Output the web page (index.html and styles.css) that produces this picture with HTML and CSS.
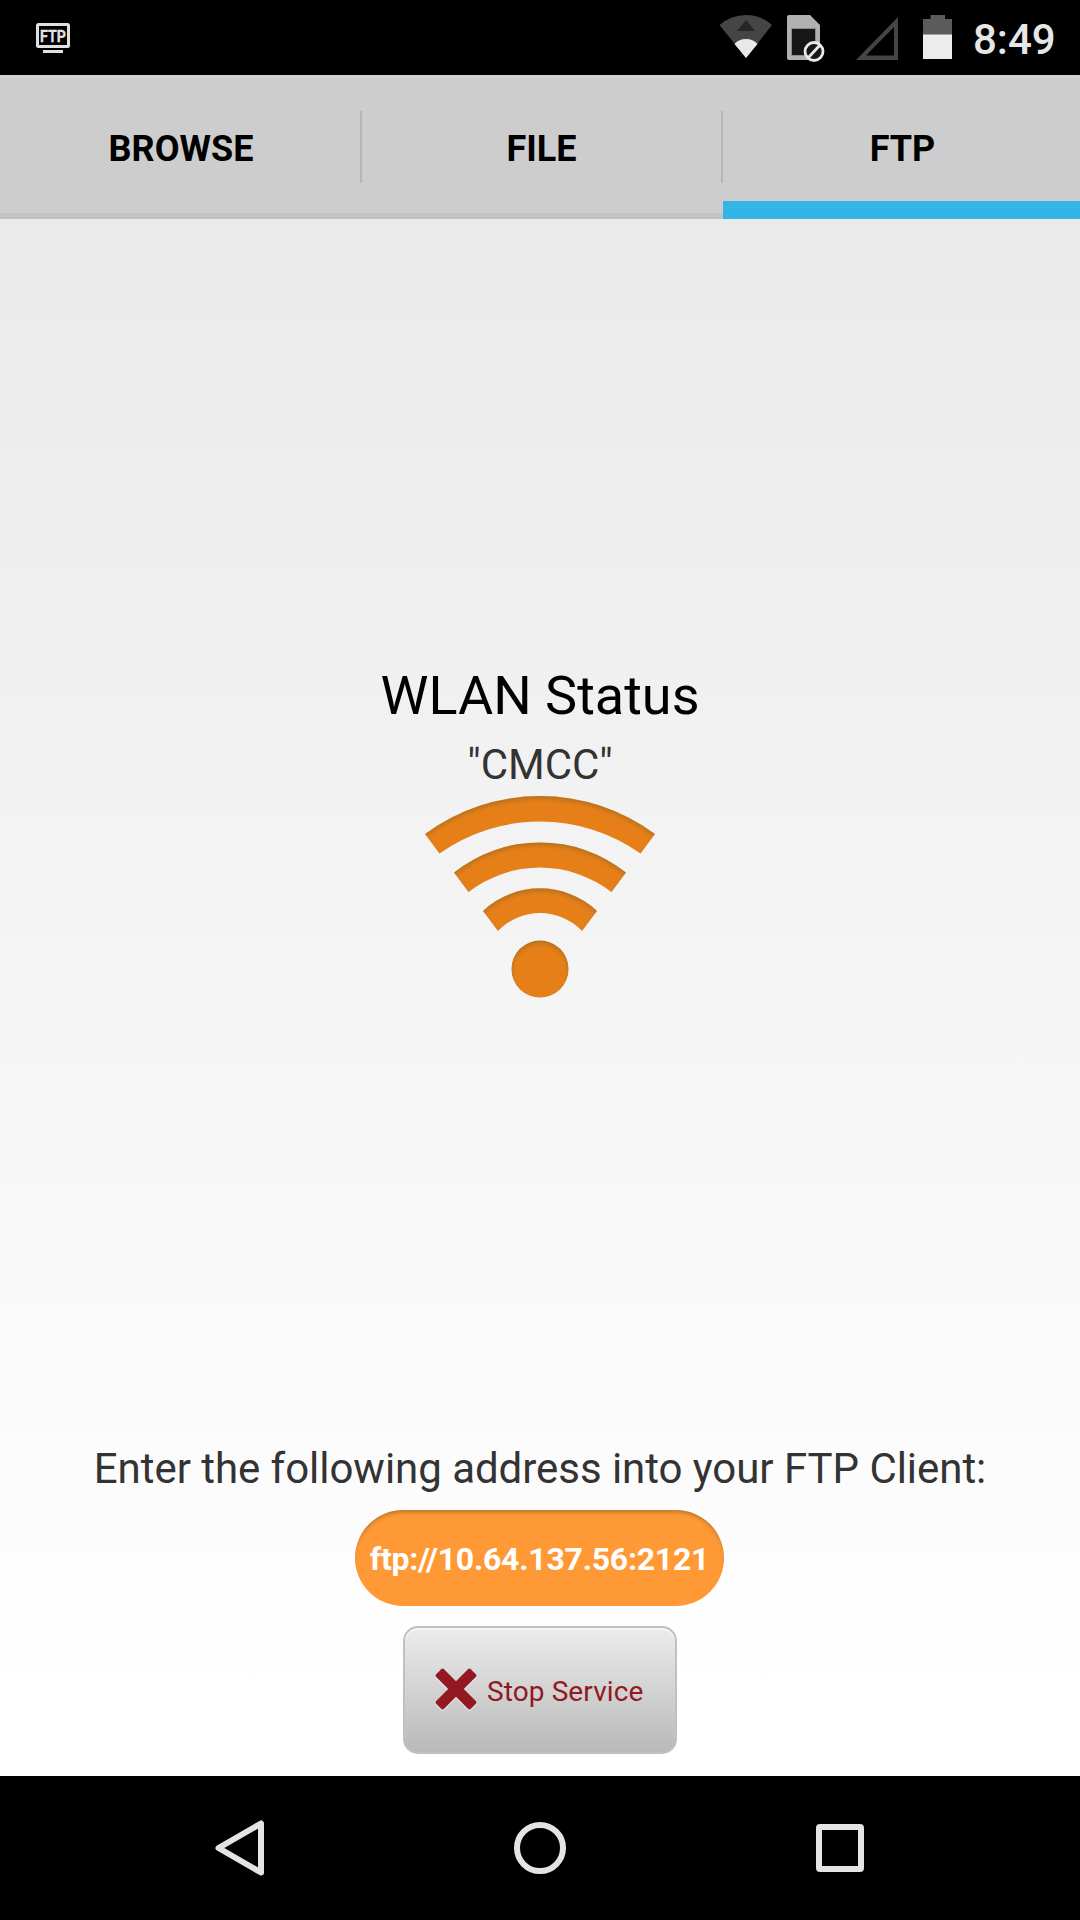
FILE: index.html
```html
<!DOCTYPE html>
<html lang="en">
<head>
    <meta charset="UTF-8">
    <meta name="viewport" content="width=device-width, initial-scale=1.0">
    <title>FTP</title>
    <link rel="stylesheet" href="styles.css">
</head>
<body>
    <header class="statusbar">
        <svg class="notification" width="34" height="32" viewBox="0 0 34 32">
            <rect x="1.500" y="1.500" width="31" height="22" rx="1" fill="none" stroke="#e0e0e0" stroke-width="3"/>
            <text class="ftp-label" x="17" y="18.500" text-anchor="middle" textLength="26" lengthAdjust="spacingAndGlyphs">FTP</text>
            <rect x="7" y="27" width="20" height="3" fill="#e0e0e0"/>
        </svg>
        <div class="indicators">
            <svg class="wifi-small" width="54" height="44" viewBox="0 0 54 44">
                <path d="M.5 10Q12 0 27 0T53 10L27 43Z" fill="#454545"/>
                <path d="M27 5L36 16H18Z" fill="#262626"/>
                <path d="M15.500 29Q20 24 27 24T38.500 29L27 43Z" fill="#e9e9e9"/>
            </svg>
            <svg class="sim" width="38" height="48" viewBox="0 0 38 48">
                <path d="M2 1H23L33 11V44Q33 46 31 46H2Q0 46 0 44V3Q0 1 2 1Z" fill="#b0b1b3"/>
                <rect x="4.500" y="14.500" width="24" height="27" fill="#171717" stroke="#8d8d8d"/>
                <circle cx="27" cy="37.500" r="9" fill="#171717" stroke="#e9e9e9" stroke-width="2.800"/>
                <path d="M21 44L33 31" stroke="#e9e9e9" stroke-width="2.800"/>
            </svg>
            <svg class="signal" width="42" height="43" viewBox="0 0 42 43">
                <path d="M0 43L42 0V43ZM10 38.500H38V10Z" fill="#454545" fill-rule="evenodd"/>
            </svg>
            <svg class="battery" width="29" height="44" viewBox="0 0 29 44">
                <path d="M7.500 0H22V4H29V20H0V4H7.500Z" fill="#5b5b5b"/>
                <rect y="19.500" width="29" height="24.500" fill="#ececec"/>
            </svg>
            <span class="clock">8:49</span>
        </div>
    </header>

    <nav class="tabs">
        <div class="tab">BROWSE</div>
        <div class="tab">FILE</div>
        <div class="tab active">FTP</div>
    </nav>

    <main class="content">
        <section class="status">
            <h1>WLAN Status</h1>
            <p class="text">"CMCC"</p>
            <svg class="wifi" width="240" height="216" viewBox="0 0 240 216">
                <defs>
                    <!-- darker rim along the upper edge of each shape -->
                    <filter id="rim" x="-5%" y="-5%" width="110%" height="110%" color-interpolation-filters="sRGB">
                        <feOffset in="SourceAlpha" dy="2.500" result="moved"/>
                        <feGaussianBlur in="moved" stdDeviation="2" result="soft"/>
                        <feComposite in="SourceAlpha" in2="soft" operator="out" result="edge"/>
                        <feColorMatrix in="edge" values="0 0 0 0 .4  0 0 0 0 .35  0 0 0 0 .15  0 0 0 .36 0" result="shade"/>
                        <feMerge>
                            <feMergeNode in="SourceGraphic"/>
                            <feMergeNode in="shade"/>
                        </feMerge>
                    </filter>
                </defs>
                <g fill="#e67f18" filter="url(#rim)">
                    <path d="M5 44A193 193 0 0 1 235 44L220.500 63.500A174 174 0 0 0 19.500 63.500Z"/>
                    <path d="M34 82.500A138 138 0 0 1 206 82.500L191.500 102A117 117 0 0 0 48.500 102Z"/>
                    <path d="M63 121A83 83 0 0 1 177 121L162 141A58 58 0 0 0 78 141Z"/>
                    <circle cx="120" cy="179" r="28.500"/>
                </g>
            </svg>
        </section>

        <section class="service">
            <p class="text">Enter the following address into your FTP Client:</p>
            <div class="address">ftp://10.64.137.56:2121</div>
            <button class="stop">
                <svg width="44" height="44" viewBox="0 0 44 44">
                    <g fill="#f0f0f0" fill-opacity=".5" transform="translate(22 24) rotate(45)">
                        <rect x="-24.500" y="-5.500" width="49" height="11" rx="2"/>
                        <rect x="-5.500" y="-24.500" width="11" height="49" rx="2"/>
                    </g>
                    <g fill="#921822" transform="translate(22 22) rotate(45)">
                        <rect x="-24.500" y="-5.500" width="49" height="11" rx="2"/>
                        <rect x="-5.500" y="-24.500" width="11" height="49" rx="2"/>
                    </g>
                </svg>
                <span>Stop Service</span>
            </button>
        </section>
    </main>

    <footer class="navbar">
        <svg width="50" height="56" viewBox="0 0 50 56">
            <path d="M46 3.500V52.500L3.500 28Z"/>
        </svg>
        <svg width="52" height="52" viewBox="0 0 52 52">
            <circle cx="26" cy="26" r="23"/>
        </svg>
        <svg width="50" height="48" viewBox="0 0 50 48">
            <rect x="4" y="3" width="42" height="42" rx="1"/>
        </svg>
    </footer>
</body>
</html>
```

FILE: styles.css
```css
* {
    box-sizing: border-box;
}

body {
    margin: 0;
    width: 1080px;
    height: 1920px;
    display: flex;
    flex-direction: column;
    overflow: hidden;
    background: #000;
    font-family: Roboto, sans-serif;
}

svg {
    display: block;
    flex-shrink: 0;
}

h1, p {
    margin: 0;
    font-weight: 400;
}

.statusbar {
    height: 75px;
    display: flex;
    justify-content: space-between;
    align-items: flex-start;
    padding: 0 26px 0 36px;
}

.notification {
    margin-top: 23px;
    overflow: visible;
}

.ftp-label {
    font-size: 17px;
    font-weight: 700;
    fill: #e0e0e0;
    stroke: #e0e0e0;
    stroke-width: 0.3px;
}

.indicators {
    display: flex;
    align-items: flex-start;
    padding-top: 14px;
}

.wifi-small {
    margin: 1px 14px 0 0;
}

.sim {
    margin-right: 31px;
}

.signal {
    margin: 3px 25px 0 0;
}

.battery {
    margin: 1px 21px 0 0;
}

.clock {
    width: 81px;
    padding-top: 1px;
    font-size: 42px;
    font-weight: 500;
    line-height: 50px;
    color: #e6e6e6;
}

.tabs {
    height: 144px;
    display: grid;
    grid-template-columns: 362px 361px 357px;
    background: #cdcdcd;
    border-top: 3px solid #d3d1d3;
}

.tab {
    display: flex;
    align-items: center;
    justify-content: center;
    padding: 6px 2px 0 0;
    font-size: 36px;
    font-weight: 700;
    color: #000;
    border-bottom: 6px solid #c2c2c2;
    background: linear-gradient(#b7b7b7, #b7b7b7) no-repeat right 33px / 2px 72px;
}

.tab:first-child {
    padding-right: 0;
}

.tab.active {
    padding: 18px 0 0 2px;
    border-bottom: 18px solid #33b5e5;
    background: none;
}

.content {
    height: 1557px;
    display: flex;
    flex-direction: column;
    justify-content: space-between;
    padding: 445px 0 22px;
    background: linear-gradient(#eaeaea, #fff 95%);
}

.status, .service {
    display: flex;
    flex-direction: column;
    align-items: center;
}

h1 {
    font-size: 54px;
    line-height: 64px;
    color: #000;
    margin-bottom: 12px;
}

.text {
    font-size: 42px;
    line-height: 50px;
    letter-spacing: -0.04px;
    color: #333;
}

.address {
    width: 369px;
    height: 96px;
    margin: 16px 1px 20px 0;
    border-radius: 48px;
    background: #ff9935;
    box-shadow: inset 0 4px 4px -2px rgba(90, 70, 30, 0.45);
    color: #fff;
    font-size: 32px;
    font-weight: 700;
    letter-spacing: -0.23px;
    line-height: 98px;
    text-align: center;
}

.stop {
    width: 274px;
    height: 128px;
    display: flex;
    align-items: center;
    gap: 9px;
    padding: 0 0 2px 29px;
    border: 2px solid #c0c0c0;
    border-radius: 15px;
    background: linear-gradient(#ececec, #b9b9b9);
    box-shadow: inset 0 2px 1px rgba(255, 255, 255, 0.6);
    color: #921822;
    font-family: inherit;
    font-size: 28px;
    letter-spacing: 0.1px;
}

.stop span {
    padding-top: 4px;
}

.navbar {
    height: 144px;
    display: flex;
    align-items: center;
    justify-content: space-between;
    padding: 0 215px;
    background: #000;
}

.navbar svg {
    fill: none;
    stroke: #e4e4e4;
    stroke-width: 6;
    stroke-linejoin: round;
}
```
